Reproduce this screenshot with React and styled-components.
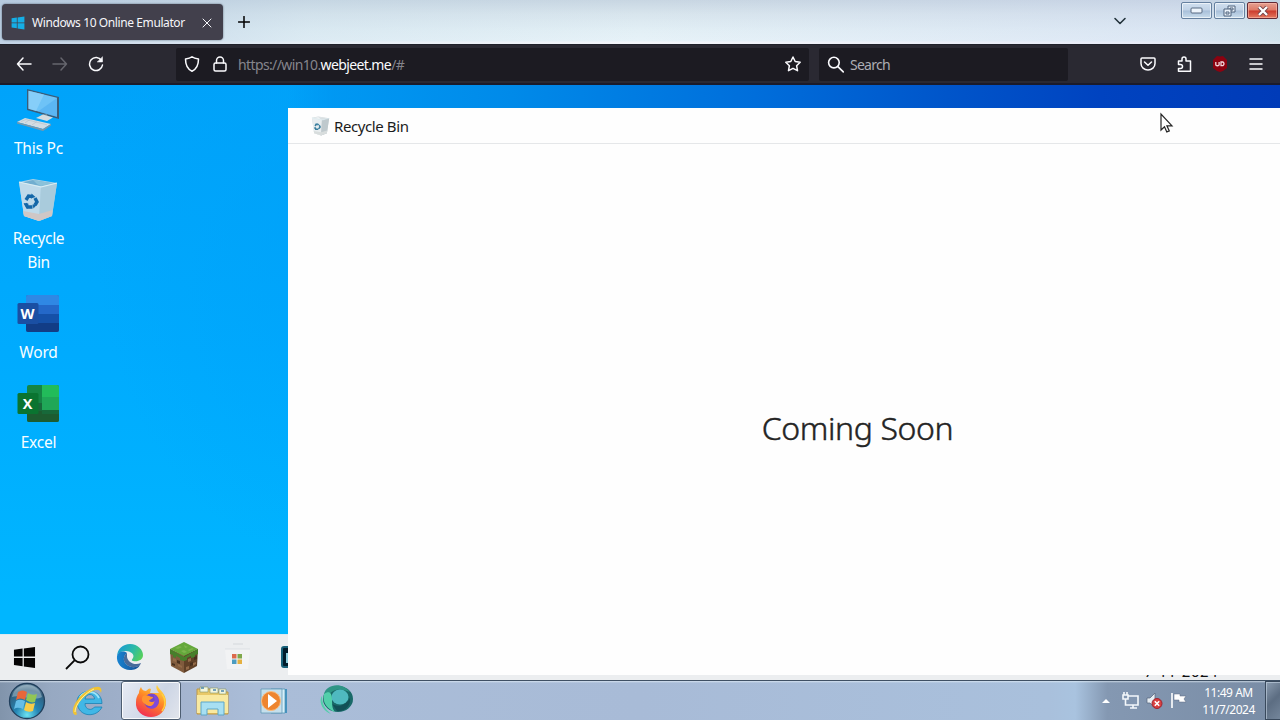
import React from "react";
import styled, { createGlobalStyle } from "styled-components";

const GlobalStyle = createGlobalStyle`
  * { box-sizing: border-box; }
  body { margin: 0; overflow: hidden; }
  svg { display: block; flex: none; }
`;

const Screen = styled.div`
  width: 1280px;
  height: 720px;
  display: flex;
  flex-direction: column;
  overflow: hidden;
  position: relative;
  font-family: "Noto Sans", "Open Sans", sans-serif;
`;

/* Browser chrome */
const TitleBar = styled.header`
  height: 44px;
  flex: none;
  display: flex;
  align-items: flex-start;
  padding: 0 2px;
  background:
    linear-gradient(90deg, rgba(176, 198, 222, 0.75), rgba(190, 214, 230, 0.25) 24%, rgba(214, 230, 240, 0) 50%, rgba(200, 208, 238, 0.3) 92%, rgba(180, 205, 220, 0.4)),
    linear-gradient(180deg, #c8d6e2 0, #d8e5ed 14px, #e2eff5 30px, #e7f2f8 41px, #f3f5fa 42px, #f3f5fa 44px);
`;
const Tab = styled.div`
  width: 221px;
  height: 36px;
  margin-top: 4px;
  border-radius: 4px;
  background: #42404c;
  box-shadow: 0 0 2px rgba(20, 30, 50, 0.65);
  display: flex;
  align-items: center;
  padding: 1px 11px 0 9px;
  color: #f6f6fa;
`;
const TabTitle = styled.span`
  font-size: 12px;
  letter-spacing: -0.4px;
  margin-left: 7px;
  white-space: nowrap;
  flex: 1;
`;
const NewTab = styled.div`
  margin: 16px 0 0 15px;
`;
const TabList = styled.div`
  margin: 14px 54px 0 auto;
  color: #24343c;
`;
const Controls = styled.div`
  display: flex;
  gap: 2px;
  margin-top: 2px;
`;
const Control = styled.div`
  width: 31px;
  height: 17px;
  display: flex;
  align-items: center;
  justify-content: center;
  border: 1px solid ${(p) => (p.$close ? "#632a35" : "#65809f")};
  border-radius: 2px;
  box-shadow: inset 0 0 0 1px ${(p) => (p.$close ? "rgba(255,195,180,.55)" : "rgba(255,255,255,.6)")};
  background: ${(p) =>
    p.$close
      ? "linear-gradient(#e4a091 0, #de7a66 48%, #cb3a2c 52%, #e47960 100%)"
      : "linear-gradient(#d0dfef 0, #c0d2e6 48%, #a8bfd9 52%, #c9ddec 100%)"};
`;
const NavBar = styled.nav`
  height: 41px;
  flex: none;
  display: flex;
  align-items: center;
  padding: 0 6px;
  background: #2a2932;
  border-top: 1px solid #20212a;
  border-bottom: 2px solid #1b1b2a;
`;
const NavButton = styled.div`
  width: 36px;
  height: 32px;
  display: grid;
  place-items: center;
  color: ${(p) => (p.$dim ? "#66666e" : "#fbfbfe")};
`;
const Field = styled.div`
  width: ${(p) => p.$width}px;
  height: 33px;
  margin-left: ${(p) => p.$gap}px;
  display: flex;
  align-items: center;
  background: #1c1b22;
  border-radius: 2px;
  color: #fbfbfe;
  padding: 0 8px;
`;
const LockSlot = styled.span`
  width: 38px;
  padding-left: 2px;
  display: grid;
  place-items: center;
`;
const Url = styled.span`
  font-size: 14px;
  letter-spacing: -0.62px;
  color: #85858c;
  flex: 1;
  white-space: nowrap;
  padding-top: 1px;
`;
const Host = styled.span`
  color: #fbfbfe;
`;
const SearchHint = styled.span`
  font-size: 14px;
  letter-spacing: -0.75px;
  color: #adadb3;
  margin-left: 6px;
  padding-top: 1px;
`;
const Tools = styled.div`
  display: flex;
  margin-left: auto;
`;

/* Emulated desktop */
const Desktop = styled.main`
  height: 595px;
  flex: none;
  display: flex;
  flex-direction: column;
  position: relative;
  overflow: hidden;
  background:
    linear-gradient(90deg, rgba(0, 150, 240, 0) 0, rgba(0, 152, 243, 0) 22.5%, rgba(0, 148, 240, 0.7) 26%, #008ae9 40%, #006edb 59%, #0055ca 74%, #0043c0 86%, #003bb8 100%) 0 0 / 100% 24px no-repeat,
    radial-gradient(ellipse 220px 360px at 310px 110px, rgba(0, 160, 248, 0.6) 0, rgba(0, 163, 250, 0) 100%),
    linear-gradient(180deg, #00a3fa 0, #00abfe 45%, #00b6ff 88%);
`;
const Shortcuts = styled.div`
  flex: 1;
  width: 77px;
  display: flex;
  flex-direction: column;
  gap: 18px;
  padding-top: 3px;
`;
const Shortcut = styled.div`
  display: flex;
  flex-direction: column;
  align-items: center;
  gap: 4px;
`;
const ShortcutLabel = styled.span`
  font-size: 15.5px;
  line-height: 24px;
  letter-spacing: ${(p) => p.$track || -0.2}px;
  color: #f7fdff;
  text-align: center;
  width: 66px;
`;
const InnerBar = styled.div`
  height: 46px;
  flex: none;
  display: flex;
  align-items: center;
  gap: 25.2px;
  padding: 0 62px 0 10px;
  background: #eceef0;
  border-top: 1px solid #dce9ef;
`;
const InnerSlot = styled.div`
  width: 28px;
  height: 34px;
  display: grid;
  place-items: center;
  margin-bottom: 1px;
`;
const InnerDate = styled.span`
  margin-left: auto;
  align-self: flex-end;
  font-size: 15px;
  line-height: 18px;
  letter-spacing: 0.45px;
  color: #111;
`;
/* The application window lies over the desktop and its bar */
const AppWindow = styled.section`
  position: absolute;
  left: 288px;
  top: 23px;
  width: 992px;
  height: 567px;
  display: flex;
  flex-direction: column;
  background: #fefefe;
`;
const AppTitle = styled.div`
  height: 36px;
  flex: none;
  display: flex;
  align-items: center;
  padding: 1px 0 0 23px;
  gap: 3px;
  border-bottom: 1px solid #e5e7e9;
  font-size: 15px;
  color: #1c1c1c;
`;
const AppName = styled.span`
  letter-spacing: -0.4px;
`;
const AppBody = styled.div`
  flex: 1;
  display: flex;
  align-items: center;
  justify-content: center;
  padding: 0 0 0 147px;
`;
const Message = styled.h1`
  margin: 37px 0 0;
  font-size: 32px;
  line-height: 44px;
  font-weight: 300;
  -webkit-text-stroke: 0.45px #242424;
  letter-spacing: -0.4px;
  color: #242424;
`;
const Pointer = styled.div`
  position: absolute;
  left: 1159px;
  top: 112px;
`;

/* Host taskbar */
const Taskbar = styled.footer`
  height: 40px;
  flex: none;
  display: flex;
  align-items: center;
  border-top: 1px solid #3f5064;
  background:
    linear-gradient(180deg, rgba(235, 245, 252, 0.65) 0, rgba(235, 245, 252, 0) 2px),
    linear-gradient(90deg, #8194ab 0, #97a9c2 4%, #a4b4cf 14%, #aabdd8 20%, #a8bbd7 50%, #a9c0dc 82%, #a9c3df 84%, #8498b2 86.5%, #798ca5 100%);
`;
const TaskSlot = styled.div`
  width: ${(p) => p.$width}px;
  height: 39px;
  display: grid;
  place-items: center;
  border: ${(p) => (p.$active ? "1px solid #4d5d71" : "none")};
  border-radius: 3px;
  box-shadow: ${(p) => (p.$active ? "inset 0 0 0 1px rgba(255,255,255,.85)" : "none")};
  background: ${(p) => (p.$active ? "linear-gradient(120deg, #e7ebf4, #ccd5e5 60%, #e2e5ec)" : "transparent")};
`;
const Tray = styled.div`
  margin-left: auto;
  display: flex;
  align-items: center;
  height: 39px;
`;
const TraySlot = styled.div`
  width: 24px;
  display: grid;
  place-items: center;
`;
const Clock = styled.div`
  width: 73px;
  display: flex;
  flex-direction: column;
  align-items: center;
  font-size: 12px;
  line-height: 17px;
  letter-spacing: -0.48px;
  color: #fff;
  padding-top: 1px;
  margin-left: 2px;
  white-space: nowrap;
`;
const ShowDesktop = styled.div`
  width: 15px;
  height: 39px;
  border: 1px solid #39495c;
  border-right: 0;
  box-shadow: inset 1px 1px 0 rgba(205, 220, 235, 0.55);
  background: linear-gradient(135deg, #8b9cb0, #5c6d82 50%, #74869b);
`;

const Line = ({ w = 16, h = w, box = "0 0 16 16", sw = 1.5, children }) => (
  <svg width={w} height={h} viewBox={box} fill="none" stroke="currentColor" strokeWidth={sw} strokeLinecap="round" strokeLinejoin="round">
    {children}
  </svg>
);

const RecycleIcon = ({ w, h, pale }) => (
  <svg width={w} height={h} viewBox="0 0 44 44">
    <path d="M2 4 16 1 40 5 35 38 22 43 7 38Z" fill={pale ? "#d3dadd" : "#a9cfe4"} />
    <path d="M2 4 24 9 22 43 7 38Z" fill={pale ? "#e8edef" : "#bfdaea"} />
    <path d="M24 9 40 5 35 38 22 43Z" fill={pale ? "#bfc9cd" : "#a9cbdc"} />
    <path d="M5 4.500 16 2 37 5.500 24 8Z" fill={pale ? "#eff3f4" : "#71aed0"} />
    <path d="M16 2 20 6 24 8 37 5.500Z" fill={pale ? "#d9e0e3" : "#8bc2da"} />
    <path d="M6 33 22 36 35.500 32 35 38 22 43 7 38Z" fill={pale ? "#d8dddd" : "#cfc7c6"} />
    <path d="M2 4 24 9 40 5" fill="none" stroke="#dbeef4" strokeWidth="1.2" />
    <g fill="none" stroke={pale ? "#397e9e" : "#1467a8"} strokeWidth="3.4">
      <path d="m9 22 2.500-4 3.500.500M18 20l2 4-2 3M15.500 29h-5l-2-3.500" />
    </g>
    <path d="m14.500 15.500 4 3.500-4.500 1.500ZM20.500 26l-4 4.500-1-4ZM10.500 31l-4-6 5 .8Z" fill={pale ? "#397e9e" : "#1467a8"} />
  </svg>
);

const PcIcon = () => (
  <svg width="44" height="44" viewBox="0 0 44 44">
    <path d="m10 1 32 8v22L10 22Z" fill="#3b5c78" />
    <path d="m11.500 2.800 28.500 7v19L11.500 20.700Z" fill="#6ec3f7" />
    <path d="M11.500 2.800 27 6.600 19 23l-7.500-2.300Z" fill="#90d3fa" opacity=".7" />
    <path d="M40 10v19L21 23.500Z" fill="#4eaef0" opacity=".6" />
    <path d="m24 27 6-1 1 4-7-1Z" fill="#738b99" />
    <path d="m19 30 7-3.500 10 3-6 3.500Z" fill="#d6dce0" />
    <path d="m0 34 8-4 26 6-8 5Z" fill="#d3dce3" />
    <path d="m0 34 26 7 8-5v1.500L26 43 0 35.500Z" fill="#7998ab" />
    <path d="m4 33.500 5-2 21 5.300M8 34.800l5-3.300M15 36.800l5-3.200" stroke="#b5bfc6" strokeWidth=".6" fill="none" />
  </svg>
);

const OfficeIcon = ({ letter, colors, excel }) => (
  <svg width="44" height="44" viewBox="0 0 44 44">
    {excel ? (
      <>
        <rect x="10" y="3" width="32" height="37" rx="2" fill={colors[1]} />
        <path d="M25 3h15q2 0 2 2v10H25z" fill={colors[0]} />
        <path d="M25 15h17v13H25z" fill="#20a757" />
        <path d="M10 21h15v8H10z" fill={colors[2]} />
        <path d="M10 29h32v9q0 2-2 2H12q-2 0-2-2z" fill={colors[3]} />
        <path d="M25 28h17v4H25z" fill={colors[2]} />
      </>
    ) : (
      <>
        <rect x="9" y="3" width="33" height="37" rx="2" fill={colors[1]} />
        <path d="M11 3h29q2 0 2 2v8H9V5q0-2 2-2" fill={colors[0]} />
        <path d="M9 22h33v10H9z" fill={colors[2]} />
        <path d="M9 31h33v7q0 2-2 2H11q-2 0-2-2z" fill={colors[3]} />
      </>
    )}
    <rect x="0.500" y="11" width="21" height="21" rx="1.500" fill={colors[4]} />
    <text x="10.500" y="27" textAnchor="middle" fontFamily="Open Sans, sans-serif" fontWeight="700" fontSize="14.500" fill="#fff">
      {letter}
    </text>
  </svg>
);

const Flag = ({ size, color }) => (
  <svg width={size} height={size} viewBox="0 0 24 24" fill={color}>
    <path d="m1 4 9-1.300V11H1zM11.300 2.500 23 1v10H11.300zM1 12.500h9V21l-9-1.300zM11.300 12.500H23V23l-11.700-1.600z" />
  </svg>
);

const EdgeIcon = () => (
  <svg width="28" height="28" viewBox="0 0 28 28">
    <defs>
      <linearGradient id="edgeTop" x1="0" x2="1" y1=".2" y2=".6">
        <stop stopColor="#1798d4" />
        <stop offset=".55" stopColor="#2bb9a9" />
        <stop offset="1" stopColor="#55cf5d" />
      </linearGradient>
      <linearGradient id="edgeBottom" x1="0" x2="1">
        <stop stopColor="#1784d2" />
        <stop offset="1" stopColor="#174d93" />
      </linearGradient>
    </defs>
    <path d="M1 14C1 6 7 1 14 1c8 0 13 6 13 11 0 5-5 7-10 6-2-.5-1-1.500 0-3 2-4-3-7-7-7-5 0-9 3-9 6" fill="url(#edgeTop)" />
    <path d="M1 13c1-4 6-6 10-3-4 3-4 8-1 11 4 4 10 4 14 1-2 4-6 5-10 5C6 27 0 20 1 13" fill="url(#edgeBottom)" />
    <path d="M11 10c-4 3-4 8-1 11 4 4 10 4 14 1l1-2c-7 3-13-1-14-6z" fill="#123f7e" opacity=".75" />
  </svg>
);

const GrassBlock = () => (
  <svg width="28" height="31" viewBox="0 0 28 31">
    <path d="m0 7 14 6v18L1 24z" fill="#805b3d" />
    <path d="m28 7-14 6v18l13-7z" fill="#604128" />
    <path d="m0 7 14-7 14 7-14 7z" fill="#64a83b" />
    <path d="M0 7v5l3 1v2l3 1v-2l4 2v2l4 1v-4zM28 7v5l-3 1v2l-4 1v-2l-4 2v2l-3 1v-4z" fill="#477f2b" />
    <path d="m5 6 4-2 3 1-4 2zM14 3l4 2-3 1M18 8l4-2 2 1-5 2M11 9l3-1 3 2-3 1" fill="#7cb54e" />
    <path d="m3 16 3 1v3l-3-1zM8 22l4 2v2l-4-2zM18 17l3-1v3l-3 1zM23 21l3-1v2l-3 2zM16 25l3-1v3l-3 1z" fill="#946b48" />
    <path d="m7 18 3 1v3l-3-1zM2 21l3 1v2l-3-1zM20 21l3-1v3l-3 1zM24 15l3-1v3l-3 1z" fill="#48311f" />
  </svg>
);

const StoreIcon = () => (
  <svg width="28" height="32" viewBox="0 0 28 32">
    <path d="M2 8h25l-2 20H4z" fill="#f2f3f4" />
    <path d="M10 3h10" fill="none" stroke="#dadde1" strokeWidth="1.300" />
    <path d="M2 8h25" stroke="#dde1e5" strokeWidth="1" />
    <path d="M9 13h4.500v4.500H9z" fill="#dc6a4c" />
    <path d="M14.500 13H19v4.500h-4.500z" fill="#7fa84a" />
    <path d="M9 18.500h4.500V23H9z" fill="#4c9cc0" />
    <path d="M14.500 18.500H19V23h-4.500z" fill="#e5b040" />
  </svg>
);

const StartOrb = () => (
  <svg width="38" height="38" viewBox="0 0 38 38">
    <defs>
      <radialGradient id="orb" cx=".5" cy=".9" r=".95">
        <stop stopColor="#6ce3f2" />
        <stop offset=".35" stopColor="#2585b4" />
        <stop offset=".75" stopColor="#315d7c" />
        <stop offset="1" stopColor="#8da9bb" />
      </radialGradient>
    </defs>
    <circle cx="19" cy="19" r="17.500" fill="url(#orb)" stroke="#203f5c" strokeWidth="1.300" />
    <path d="M4 15C7-1 31-1 34 15c-8 5-21-3-30 0" fill="#dcebf0" opacity=".38" />
    <path d="M10 10c3-2 6-2 9 0l-2 8c-3-2-6-2-9 0z" fill="#e8673a" />
    <path d="M20 11c3 2 6 2 9 1l-2 8c-3 1-6 0-9-2z" fill="#92c654" />
    <path d="M8 19c3-2 6-1 9 0l-2 8c-3-1-6-2-9 0z" fill="#65bde7" />
    <path d="M18 20c3 2 6 2 9 1l-2 8c-3 1-6 1-9-1z" fill="#f7cc48" />
  </svg>
);

const IeIcon = () => (
  <svg width="34" height="34" viewBox="0 0 34 34">
    <path d="M31 19.500H14c0 6.500 7 7.500 9.500 3.500H31C26 34 7 34 6 18 6 4 31 3 31 19.500ZM14 15h9.500c0-6-9-6-9.500 0Z" fill="#41b7e6" stroke="#1b82b4" strokeWidth=".8" fillRule="evenodd" />
    <path d="M9 13C14 6 24 6 28 14" fill="none" stroke="#9ee3f7" strokeWidth="1.800" />
    <path d="M5 31C-3 30 5 12 19 5c8-4 13-3 11 4-1-4-5-4-10-1C9 14 3 25 6 30z" fill="#f1c332" />
    <path d="M4 28C4 20 14 9 23 5" fill="none" stroke="#fff099" strokeWidth="1" />
  </svg>
);

const FirefoxIcon = () => (
  <svg width="32" height="32" viewBox="0 0 32 32">
    <defs>
      <linearGradient id="fox" x1=".8" x2=".3" y1="0" y2="1">
        <stop stopColor="#ffe24a" />
        <stop offset=".45" stopColor="#ff8b25" />
        <stop offset="1" stopColor="#f12d54" />
      </linearGradient>
    </defs>
    <path d="M4 8c0-3 1-4 2-6 1 3 3 4 5 4 3-3 4-3 5-2l-1 4h9c-3-4-3-6-2-8 2 5 9 8 9 17 0 9-7 15-15 15S0 26 1 17c0-4 1-6 3-9" fill="url(#fox)" />
    <circle cx="16.500" cy="16" r="7.500" fill="#7447c8" />
    <path d="M8 11c4-2 6 1 10 1 0 2-3 2-4 4 2 2 5 1 7-1-1 6-6 8-11 4-3-2-4-5-2-8" fill="#ff9430" />
    <path d="M18 9c6 2 7 9 3 13-2 2-6 2-9 0 8 0 9-7 6-13" fill="#8149da" />
    <path d="M27 9c4 5 4 12 0 17" stroke="#ffd03e" strokeWidth="1.500" fill="none" />
  </svg>
);

const ExplorerIcon = () => (
  <svg width="34" height="30" viewBox="0 0 34 30">
    <path d="M1 3h13l2 3h16v22H1z" fill="#e9c968" stroke="#be9846" strokeWidth="1" />
    <path d="M4 1h8v5H4zM14 2h8v5h-8zM23 3h7v5h-7z" fill="#f2f6de" stroke="#869663" strokeWidth=".6" />
    <path d="M5 2h3M17 4h3M25 5h3" stroke="#4c86ad" strokeWidth="1.500" />
    <path d="M1 9h31v18H1z" fill="#f9e9a0" />
    <path d="M5 29V16h23v13h-6v-6H11v6z" fill="#a7dff2" stroke="#5da6c9" strokeWidth="1" />
  </svg>
);

const MediaIcon = () => (
  <svg width="30" height="30" viewBox="0 0 30 30">
    <path d="M15 3h13v24H15z" fill="#4592bf" />
    <path d="M12 3h14v24H12z" fill="#d7eff8" stroke="#488fb3" strokeWidth=".7" />
    <path d="M2 3h21v24H2z" fill="#c5dfec" stroke="#5793b2" strokeWidth=".7" />
    <circle cx="12" cy="15" r="9.500" fill="#ee852f" stroke="#f8bc80" strokeWidth="1" />
    <path d="m9 8 9 7-9 7z" fill="#fff" />
  </svg>
);

const GlobeIcon = () => (
  <svg width="34" height="33" viewBox="0 0 34 33">
    <ellipse cx="18" cy="15" rx="15" ry="13" fill="#196968" />
    <path d="M8 4C15-1 25 1 30 8c-6-2-9-3-14-2-5 1-7 5-11 7C3 10 5 6 8 4" fill="#2e9585" />
    <ellipse cx="20" cy="13" rx="8.500" ry="7.500" fill="#4fb9bf" />
    <path d="M12 20c7 4 14 1 18-6 1 8-5 14-13 13z" fill="#124f56" />
    <path d="M2 12c0 8 3 13 9 18C3 27-2 18 2 12M4 10c5-4 8-1 8 5 0 6 0 9 3 13C7 25 2 18 4 10" fill="#52cfaa" />
  </svg>
);

export default function App() {
  return (
    <Screen>
      <GlobalStyle />
      <TitleBar>
        <Tab>
          <Flag size={14} color="#15aee5" />
          <TabTitle>Windows 10 Online Emulator</TabTitle>
          <Line w={10} box="0 0 10 10" sw={1}><path d="m1 1 8 8M9 1 1 9" /></Line>
        </Tab>
        <NewTab><Line w={12} box="0 0 12 12" sw={1.5}><path d="M6 .5v11M.5 6h11" /></Line></NewTab>
        <TabList><Line w={14} box="0 0 14 14" sw={1.6}><path d="m2 4.500 5 5 5-5" /></Line></TabList>
        <Controls>
          <Control>
            <svg width="13" height="7"><rect x="1" y="1" width="11" height="5" rx="1" fill="#edf4fb" stroke="#586a82" /></svg>
          </Control>
          <Control>
            <svg width="13" height="12" viewBox="0 0 13 12" fill="#e9f1f9" stroke="#4f627c"><path d="M5 1h7v6H5z" /><path d="M7 3h3v2H7z" /><path d="M1 4h7v7H1z" /><path d="M3 7h3v2H3z" /></svg>
          </Control>
          <Control $close>
            <svg width="12" height="10" viewBox="0 0 12 10"><path d="m2 1 8 8M10 1 2 9" stroke="#724348" strokeWidth="4" /><path d="m2 1 8 8M10 1 2 9" stroke="#fff" strokeWidth="2.300" /></svg>
          </Control>
        </Controls>
      </TitleBar>

      <NavBar>
        <NavButton><Line><path d="M15 8H1.500M7 2 1.500 8 7 14" /></Line></NavButton>
        <NavButton $dim><Line><path d="M1 8h13.500M9 2l5.500 6L9 14" /></Line></NavButton>
        <NavButton>
          <Line><path d="M13.500 4.500A6.500 6.500 0 1 0 14.500 9" /><path d="M14.500 1v5h-5z" fill="currentColor" strokeWidth=".5" /></Line>
        </NavButton>
        <Field $width={633} $gap={62}>
          <Line><path d="M8 .8c2 1.700 4 2 6.500 2.300 0 6-1.500 10-6.500 12.100C3 13.100 1.500 9 1.500 3.100 4 2.800 6 2.500 8 .8Z" /></Line>
          <LockSlot><Line><rect x="2" y="7" width="12" height="8" rx="1.500" /><path d="M4.500 7V4.500a3.500 3.500 0 0 1 7 0V7" /></Line></LockSlot>
          <Url>https://win10.<Host>webjeet.me</Host>/#</Url>
          <Line><path d="m8 1 2.200 4.500 5 .7-3.600 3.500.9 5L8 12.300l-4.500 2.400.9-5L.8 6.200l5-.7z" /></Line>
        </Field>
        <Field $width={249} $gap={10}>
          <Line w={17}><circle cx="6.500" cy="6.200" r="5" /><path d="m10.500 10.200 4.800 4.800" /></Line>
          <SearchHint>Search</SearchHint>
        </Field>
        <Tools>
          <NavButton><Line><path d="M2 2h12q1 0 1 1v4.500a7 6.500 0 0 1-14 0V3q0-1 1-1Z" /><path d="m4.500 6 3.500 3.300L11.500 6" /></Line></NavButton>
          <NavButton><Line><path d="M2.500 15.200h12V5H10V3a2 2 0 0 0-4 0v2H2.500v3.500h2a2 2 0 0 1 0 4h-2z" /></Line></NavButton>
          <NavButton>
            <svg width="16" height="16" viewBox="0 0 16 16"><path d="m5 0 3 .6 3-.6 4 4v8l-4 3-3 1-3-1-4-3V4z" fill="#8c0210" /><path d="M3.800 6v3q1.600 1.500 3.300 0V6M9 6h2q2 1.800 0 3.600H9z" fill="none" stroke="#f2d7dc" strokeWidth="1.300" /></svg>
          </NavButton>
          <NavButton><Line w={14} box="0 0 14 14"><path d="M1 2h12M1 7h12M1 12h12" /></Line></NavButton>
        </Tools>
      </NavBar>

      <Desktop>
        <Shortcuts>
          <Shortcut><PcIcon /><ShortcutLabel>This Pc</ShortcutLabel></Shortcut>
          <Shortcut><RecycleIcon w={44} h={44} /><ShortcutLabel $track={-0.35}>Recycle Bin</ShortcutLabel></Shortcut>
          <Shortcut><OfficeIcon letter="W" colors={["#2f88e4", "#2468c8", "#1551a8", "#123d86", "#1a4fa3"]} /><ShortcutLabel>Word</ShortcutLabel></Shortcut>
          <Shortcut><OfficeIcon excel letter="X" colors={["#22bc5a", "#158544", "#17693a", "#1d5c30", "#0a7430"]} /><ShortcutLabel>Excel</ShortcutLabel></Shortcut>
        </Shortcuts>
        <InnerBar>
          <InnerSlot><Flag size={23} color="#050505" /></InnerSlot>
          <InnerSlot><svg width="25" height="25" viewBox="0 0 25 25" fill="none" stroke="#090909" strokeWidth="1.800"><circle cx="15.500" cy="9.500" r="8" /><path d="M9.800 15.200 1 24" /></svg></InnerSlot>
          <InnerSlot><EdgeIcon /></InnerSlot>
          <InnerSlot><GrassBlock /></InnerSlot>
          <InnerSlot><StoreIcon /></InnerSlot>
          <InnerSlot><svg width="18" height="22"><rect x="1" y="1" width="16" height="20" rx="2" fill="#001c2b" stroke="#176078" strokeWidth="2" /><path d="M6 7v10" stroke="#8bccdc" strokeWidth="2" /></svg></InnerSlot>
          <InnerDate>7-11-2024</InnerDate>
        </InnerBar>
        <AppWindow>
          <AppTitle><RecycleIcon w={20} h={20} pale /><AppName>Recycle Bin</AppName></AppTitle>
          <AppBody><Message>Coming Soon</Message></AppBody>
        </AppWindow>
      </Desktop>

      <Taskbar>
        <TaskSlot $width={54}><StartOrb /></TaskSlot>
        <TaskSlot $width={67}><IeIcon /></TaskSlot>
        <TaskSlot $width={60} $active><FirefoxIcon /></TaskSlot>
        <TaskSlot $width={64}><ExplorerIcon /></TaskSlot>
        <TaskSlot $width={57}><MediaIcon /></TaskSlot>
        <TaskSlot $width={70}><GlobeIcon /></TaskSlot>
        <Tray>
          <TraySlot><svg width="8" height="5"><path d="m0 5 4-4 4 4z" fill="#fff" /></svg></TraySlot>
          <TraySlot><svg width="18" height="18" viewBox="0 0 18 18" fill="none" stroke="#f4f8fb" strokeWidth="1.600"><path d="M7 4h10v9H7M9 16h7M12 13v3M2 3h5v4H2zM3 0v3M6 0v3M4.500 7v6H7" /></svg></TraySlot>
          <TraySlot><svg width="18" height="18" viewBox="0 0 18 18"><path d="M2 6h3l5-5v15l-5-5H2z" fill="#e8eef3" stroke="#546278" strokeWidth=".7" /><circle cx="12" cy="11.500" r="5" fill="#d84040" stroke="#9f2431" /><path d="m9.800 9.300 4.400 4.400M14.200 9.300l-4.400 4.400" stroke="#fff" strokeWidth="1.600" /></svg></TraySlot>
          <TraySlot><svg width="17" height="17" viewBox="0 0 17 17"><path d="M2 1v15" stroke="#fff" strokeWidth="1.600" /><path d="M4 2h6v2h6l-2 3 2 3H9V8H4z" fill="#fff" stroke="#5c6b80" strokeWidth=".5" /></svg></TraySlot>
          <Clock><span>11:49 AM</span><span>11/7/2024</span></Clock>
          <ShowDesktop />
        </Tray>
      </Taskbar>
      <Pointer>
        <svg width="16" height="22" viewBox="0 0 16 22"><path d="M2 2v16l3.500-3.300 2.300 5.200 2.500-1-2.400-5.100H13z" fill="#fff" stroke="#252525" strokeWidth="1.200" /></svg>
      </Pointer>
    </Screen>
  );
}
